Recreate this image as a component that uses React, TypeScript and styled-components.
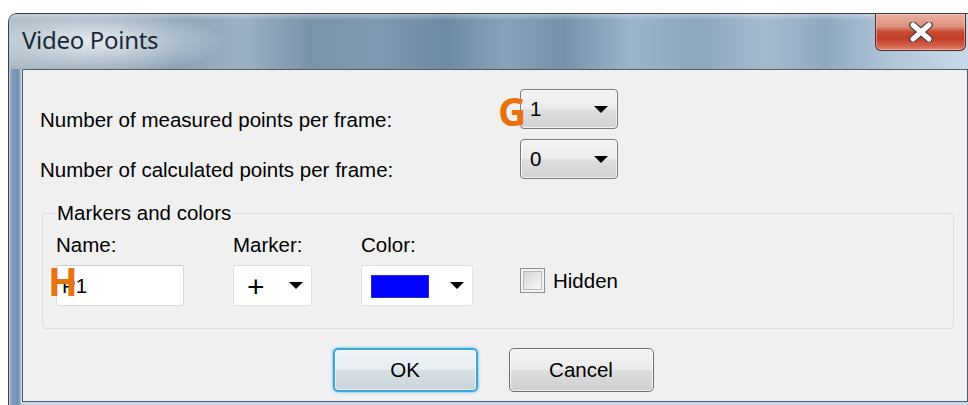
import React from "react";
import styled, { createGlobalStyle } from "styled-components";

const GlobalStyle = createGlobalStyle`
  html, body {
    margin: 0;
    padding: 0;
    background: #ffffff;
    overflow: hidden;
  }
  body {
    font-family: "Liberation Sans", Arial, sans-serif;
  }
`;

const Page = styled.div`
  width: 968px;
  height: 405px;
  overflow: hidden;
  padding: 14px 0 0 9px;
  box-sizing: border-box;
`;

const Window = styled.div`
  width: 972px;
  display: flex;
  flex-direction: column;
  border-radius: 8px 8px 0 0;
  overflow: hidden;
  background: linear-gradient(
    90deg,
    #d3dee8 0px,
    #86a2bf 2px,
    #7190b1 9px,
    #8fa9c3 11px,
    #c9d7e3 12px,
    #c9d7e3 13px
  );
  box-shadow: -1px 0 0 #3a3f46, 0 -1px 0 #3a3f46;
`;

const TitleBar = styled.div`
  height: 55px;
  display: flex;
  align-items: flex-start;
  padding: 0 15px 0 13px;
  box-sizing: border-box;
  background:
    radial-gradient(ellipse 130px 34px at 85px 27px, rgba(238, 243, 247, 0.9), rgba(238, 243, 247, 0)),
    linear-gradient(180deg, rgba(255, 255, 255, 0.35) 0px, rgba(255, 255, 255, 0) 6px),
    linear-gradient(
      90deg,
      #a9b8c4 0%,
      #97a9b8 9%,
      #8da2b3 17%,
      #9db1c3 24%,
      #7b93a8 31%,
      #8099b0 38%,
      #6f8aa3 45%,
      #88a2b9 51%,
      #7791aa 57%,
      #9cb4c9 64%,
      #8ea7bd 71%,
      #a6bacd 78%,
      #90a8be 84%,
      #b1c7da 91%,
      #cadced 100%
    );
`;

const Title = styled.div`
  margin-top: 10px;
  font-family: "Noto Sans", "Open Sans", sans-serif;
  font-size: 24px;
  line-height: 32px;
  color: #1b2836;
  letter-spacing: -0.3px;
`;

const CloseButton = styled.div`
  margin-left: auto;
  width: 91px;
  height: 37px;
  box-sizing: border-box;
  border: 1px solid #5a2a22;
  border-top: none;
  border-radius: 0 0 6px 6px;
  background: linear-gradient(
    180deg,
    #e9b0a2 0%,
    #dd8f7c 35%,
    #c84a33 50%,
    #c23d27 68%,
    #d0614a 88%,
    #dc8a74 100%
  );
  box-shadow: inset 0 0 0 1px rgba(255, 220, 210, 0.45);
  display: flex;
  align-items: center;
  justify-content: center;
`;

const Client = styled.div`
  margin: 0 13px 5px 13px;
  background: #f0f0f0;
  border: 1px solid #4f5f70;
  padding: 19px 13px 9px 17px;
  display: flex;
  flex-direction: column;
  font-size: 20.5px;
  color: #000;
`;

const CountGrid = styled.div`
  display: grid;
  grid-template-columns: 480px 98px;
  row-gap: 8px;
`;

const FieldLabel = styled.div`
  padding-top: 20px;
  line-height: 22px;
  white-space: nowrap;
`;

const Anchor = styled.div`
  position: relative;
`;

const DropList = styled.div<{ $width: number }>`
  width: ${(p) => p.$width}px;
  height: 40px;
  box-sizing: border-box;
  border: 1px solid #7a7a7a;
  border-radius: 4px;
  background: linear-gradient(180deg, #f3f3f3 0%, #ececec 48%, #dfdfdf 52%, #d1d1d1 100%);
  box-shadow: inset 0 0 0 1px rgba(255, 255, 255, 0.7);
  display: flex;
  align-items: center;
  justify-content: space-between;
  padding: 0 9px 0 9px;
  line-height: 22px;
`;

const WhiteCombo = styled.div<{ $width: number }>`
  width: ${(p) => p.$width}px;
  height: 41px;
  box-sizing: border-box;
  border: 1px solid #dde1e5;
  border-radius: 3px;
  background: #ffffff;
  display: flex;
  align-items: center;
  justify-content: space-between;
  padding: 0 8px 0 10px;
`;

const TextInput = styled.div`
  width: 128px;
  height: 41px;
  box-sizing: border-box;
  border: 1px solid #d6dce2;
  border-top-color: #c9cfd6;
  border-radius: 3px;
  background: #ffffff;
  display: flex;
  align-items: center;
  padding-left: 5px;
  line-height: 22px;
`;

const MarkerGlyph = styled.span`
  font-size: 30px;
  line-height: 30px;
  margin-left: 3px;
  margin-top: 2px;
`;

const Swatch = styled.span<{ $color: string }>`
  width: 56px;
  height: 21px;
  margin-top: 2px;
  background: ${(p) => p.$color};
  box-shadow: 0 0 0 1px #2a2ad6;
`;

const GroupBox = styled.fieldset`
  margin: 21px 0 0 2px;
  padding: 10px 0 22px 13px;
  border: 1px solid #d5dee5;
  border-radius: 4px;
  min-width: 0;
`;

const GroupLegend = styled.legend`
  padding: 0 1px;
  margin-left: 0;
  line-height: 22px;
`;

const MarkerGrid = styled.div`
  display: grid;
  grid-template-columns: 128px 79px 112px auto;
  column-gap: 49px;
  row-gap: 9px;
  align-items: start;
`;

const ColumnLabel = styled.div`
  line-height: 22px;
`;

const CheckRow = styled.label`
  display: flex;
  align-items: center;
  gap: 8px;
  margin-top: 3px;
  margin-left: -2px;
  line-height: 22px;
`;

const CheckBox = styled.span`
  width: 25px;
  height: 25px;
  box-sizing: border-box;
  border: 1px solid #8e8f8f;
  background: #f4f4f4;
  padding: 2px;
  display: flex;
  & > span {
    flex: 1;
    border: 1px solid #b6b8ba;
    background: linear-gradient(135deg, #d4d6d8 0%, #e8e9ea 55%, #f8f8f8 100%);
  }
`;

const ButtonRow = styled.div`
  display: flex;
  justify-content: center;
  gap: 31px;
  margin-top: 19px;
  padding-right: 8px;
`;

const PushButton = styled.div<{ $default?: boolean }>`
  width: 145px;
  height: 44px;
  box-sizing: border-box;
  border-radius: 5px;
  border: ${(p) => (p.$default ? "2px solid #3ba5de" : "1px solid #707070")};
  background: ${(p) =>
    p.$default
      ? "linear-gradient(180deg, #eef3f6 0%, #e6edf1 48%, #d7dfe4 52%, #cbd4da 100%)"
      : "linear-gradient(180deg, #f2f2f2 0%, #ebebeb 48%, #dddddd 52%, #cfcfcf 100%)"};
  box-shadow: ${(p) =>
    p.$default
      ? "0 0 2px 1px rgba(80, 180, 235, 0.55), inset 0 0 0 1px rgba(255,255,255,0.6)"
      : "inset 0 0 0 1px rgba(255,255,255,0.7)"};
  display: flex;
  align-items: center;
  justify-content: center;
  line-height: 22px;
`;

const Callout = styled.span<{ $left: number; $top: number }>`
  position: absolute;
  left: ${(p) => p.$left}px;
  top: ${(p) => p.$top}px;
  font-family: "Open Sans", "Noto Sans", sans-serif;
  font-weight: 700;
  font-size: 39px;
  line-height: 1;
  color: #e8720f;
  pointer-events: none;
`;

function DownArrow() {
  return (
    <svg width="14" height="7" viewBox="0 0 14 7">
      <polygon points="0,0 14,0 7,7" fill="#000" />
    </svg>
  );
}

function CloseGlyph() {
  return (
    <svg width="32" height="20" viewBox="0 0 32 20">
      <path
        d="M8 3 L24 17 M24 3 L8 17"
        stroke="#3d3d3d"
        strokeWidth="7.5"
        strokeLinecap="round"
      />
      <path
        d="M8 3 L24 17 M24 3 L8 17"
        stroke="#ffffff"
        strokeWidth="5"
        strokeLinecap="round"
      />
    </svg>
  );
}

export default function App() {
  return (
    <>
      <GlobalStyle />
      <Page>
        <Window>
          <TitleBar>
            <Title>Video Points</Title>
            <CloseButton>
              <CloseGlyph />
            </CloseButton>
          </TitleBar>
          <Client>
            <CountGrid>
              <FieldLabel>Number of measured points per frame:</FieldLabel>
              <Anchor>
                <DropList $width={98}>
                  <span>1</span>
                  <DownArrow />
                </DropList>
                <Callout $left={-22} $top={2}>G</Callout>
              </Anchor>
              <FieldLabel>Number of calculated points per frame:</FieldLabel>
              <DropList $width={98}>
                <span>0</span>
                <DownArrow />
              </DropList>
            </CountGrid>

            <GroupBox>
              <GroupLegend>Markers and colors</GroupLegend>
              <MarkerGrid>
                <ColumnLabel>Name:</ColumnLabel>
                <ColumnLabel>Marker:</ColumnLabel>
                <ColumnLabel>Color:</ColumnLabel>
                <span />
                <Anchor>
                  <TextInput>P1</TextInput>
                  <Callout $left={-8} $top={-4}>H</Callout>
                </Anchor>
                <WhiteCombo $width={79}>
                  <MarkerGlyph>+</MarkerGlyph>
                  <DownArrow />
                </WhiteCombo>
                <WhiteCombo $width={112}>
                  <Swatch $color="#0000ff" />
                  <DownArrow />
                </WhiteCombo>
                <CheckRow>
                  <CheckBox>
                    <span />
                  </CheckBox>
                  Hidden
                </CheckRow>
              </MarkerGrid>
            </GroupBox>

            <ButtonRow>
              <PushButton $default>OK</PushButton>
              <PushButton>Cancel</PushButton>
            </ButtonRow>
          </Client>
        </Window>
      </Page>
    </>
  );
}
